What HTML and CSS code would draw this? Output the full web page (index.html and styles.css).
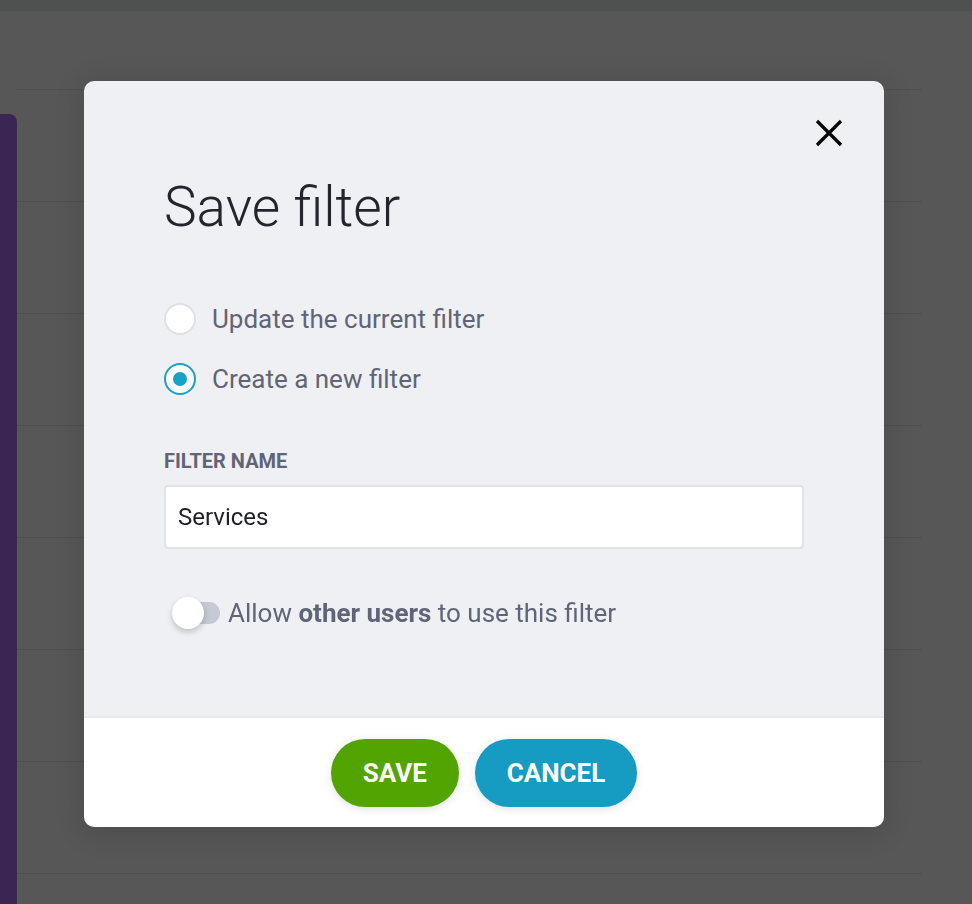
FILE: index.html
```html
<!DOCTYPE html>
<html lang="en">
<head>
    <meta charset="UTF-8">
    <meta name="viewport" content="width=device-width, initial-scale=1.0">
    <title>Save filter</title>
    <link rel="stylesheet" href="styles.css">
</head>
<body>
    <div class="page">
        <div class="topbar"></div>
        <div class="content">
            <div class="sidebar"></div>
            <div class="rows">
                <div class="row"></div>
                <div class="row"></div>
                <div class="row"></div>
                <div class="row"></div>
                <div class="row"></div>
                <div class="row"></div>
                <div class="row"></div>
                <div class="row"></div>
            </div>
        </div>
    </div>

    <div class="overlay">
        <div class="modal">
            <div class="modal-body">
                <button class="close" aria-label="Close">
                    <svg width="28" height="28" viewBox="0 0 28 28">
                        <path d="M2 2 L26 26 M26 2 L2 26" stroke="#000" stroke-width="3.2" fill="none"/>
                    </svg>
                </button>
                <h1>Save filter</h1>

                <label class="radio">
                    <span class="radio-circle"></span>
                    Update the current filter
                </label>
                <label class="radio checked">
                    <span class="radio-circle"></span>
                    Create a new filter
                </label>

                <div class="field">
                    <div class="field-label">Filter name</div>
                    <input type="text" value="Services">
                </div>

                <label class="toggle">
                    <span class="switch"><span class="knob"></span></span>
                    <span>Allow <b>other users</b> to use this filter</span>
                </label>
            </div>
            <div class="modal-footer">
                <button class="btn btn-save">Save</button>
                <button class="btn btn-cancel">Cancel</button>
            </div>
        </div>
    </div>
</body>
</html>
```

FILE: styles.css
```css
body {
    margin: 0;
    font-family: Roboto, "Liberation Sans", sans-serif;
    background-color: #575757;
    height: 904px;
    overflow: hidden;
}
.page {
    height: 100%;
}
.topbar {
    height: 11px;
    background-color: #4f5150;
}
.content {
    display: flex;
    height: 893px;
    overflow: hidden;
}
.sidebar {
    width: 17px;
    height: 790px;
    margin-top: 103px;
    background-color: #3a2553;
    border-top-right-radius: 8px;
}
.rows {
    width: 905px;
    padding-top: 78px;
}
.row {
    height: 112px;
    border-top: 1px solid #4f4f4f;
    box-sizing: border-box;
}
.overlay {
    position: fixed;
    top: 0;
    left: 0;
    right: 0;
    bottom: 0;
}
.modal {
    position: absolute;
    left: 84px;
    top: 81px;
    width: 800px;
    border-radius: 10px;
    overflow: hidden;
    box-shadow: 0 4px 30px rgba(0, 0, 0, 0.15);
}
.modal-body {
    position: relative;
    background-color: #eff0f4;
    padding: 99px 80px 0 80px;
    height: 635px;
    box-sizing: border-box;
}
.close {
    position: absolute;
    top: 38px;
    right: 41px;
    background: none;
    border: none;
    padding: 0;
    cursor: pointer;
    line-height: 0;
}
h1 {
    margin: 0 0 68px 0;
    font-size: 55px;
    font-weight: 300;
    color: #22252b;
    line-height: 1;
}
.radio {
    display: flex;
    align-items: center;
    gap: 16px;
    font-size: 26px;
    color: #5f6577;
    height: 32px;
    margin-bottom: 28px;
}
.radio-circle {
    width: 32px;
    height: 32px;
    box-sizing: border-box;
    border-radius: 50%;
    background-color: white;
    border: 2px solid #dfe1e6;
    display: flex;
    align-items: center;
    justify-content: center;
}
.radio.checked .radio-circle {
    border-color: #17a2c8;
}
.radio.checked .radio-circle::after {
    content: "";
    width: 14px;
    height: 14px;
    border-radius: 50%;
    background-color: #17a2c8;
}
.field {
    margin-top: 54px;
}
.field-label {
    font-size: 20px;
    font-weight: 700;
    text-transform: uppercase;
    color: #5f6577;
    margin-bottom: 12px;
}
input {
    width: 100%;
    height: 64px;
    box-sizing: border-box;
    border: 2px solid #e0e2e6;
    border-radius: 4px;
    padding: 0 12px;
    font-family: Roboto, "Liberation Sans", sans-serif;
    font-size: 24px;
    color: #1e2025;
    background-color: white;
}
.toggle {
    display: flex;
    align-items: center;
    gap: 8px;
    margin-top: 49px;
    margin-left: 8px;
    font-size: 26px;
    color: #5f6577;
}
.toggle b {
    font-weight: 700;
}
.switch {
    position: relative;
    width: 48px;
    height: 22px;
    border-radius: 11px;
    background-color: #c5c9d3;
}
.knob {
    position: absolute;
    left: 0;
    top: -5px;
    width: 32px;
    height: 32px;
    border-radius: 50%;
    background-color: white;
    box-shadow: 0 3px 6px rgba(0, 0, 0, 0.2);
}
.modal-footer {
    background-color: white;
    border-top: 2px solid #e8e9ed;
    height: 111px;
    box-sizing: border-box;
    display: flex;
    justify-content: center;
    gap: 16px;
    padding-top: 21px;
}
.btn {
    height: 68px;
    border: none;
    border-radius: 34px;
    color: white;
    font-family: Roboto, "Liberation Sans", sans-serif;
    font-size: 26px;
    font-weight: 700;
    text-transform: uppercase;
    padding: 0 32px;
    box-shadow: 0 2px 8px rgba(0, 0, 0, 0.12);
    cursor: pointer;
}
.btn-save {
    background-color: #52a500;
}
.btn-cancel {
    background-color: #169bc2;
}
```
